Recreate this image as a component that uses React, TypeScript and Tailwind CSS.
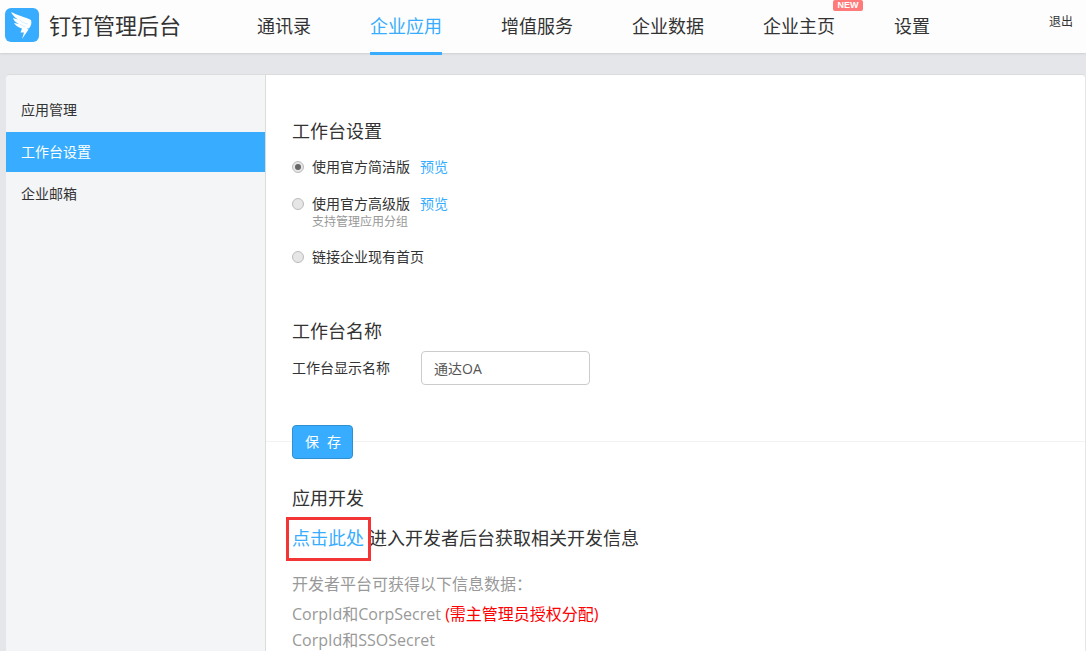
const CJK = "font-['Open_Sans','Noto_Sans_CJK_SC',sans-serif]";

function Logo() {
  return (
    <div className="w-[34px] h-[34px] rounded-[6px] bg-[#38adff] shrink-0">
      <svg width="34" height="34" viewBox="0 0 34 34">
        <path d="M6 4 C12 7 21 9.5 26 12 C27 15 26 18 24 20.5 L21.5 20.5 L23.5 21.5 L17 31 L19 24.5 L15.5 24.5 L17 20.5 C13 19.5 10.5 17.5 9 15 L14 16 C11 14.5 8.5 12.5 8 10 L13 11.5 C10 9.5 7.5 7 6 4 Z" fill="#fff" />
        <path d="M14.5 12 C17 14 20 15.5 23 16 M15 16.2 C16.5 17.3 18.5 18.3 20.5 18.8" stroke="#bfe4ff" strokeWidth="0.7" fill="none" />
      </svg>
    </div>
  );
}

function NavItem({ label, active, badge }: { label: string; active?: boolean; badge?: boolean }) {
  return (
    <div className={`relative h-[55px] pt-[15px] text-[18px] leading-[22px] border-b-[3px] ${active ? "text-[#38adff] border-[#38adff]" : "text-[#333] border-transparent"}`}>
      {label}
      {badge && (
        <span className="absolute left-[70px] top-0 w-[30px] h-[11px] rounded-[2px] bg-[#ff7b7b] text-white text-[9px] leading-[11px] font-bold text-center font-['Liberation_Sans',sans-serif]">NEW</span>
      )}
    </div>
  );
}

function Radio({ checked }: { checked?: boolean }) {
  return (
    <span className="w-[12px] h-[12px] rounded-full border border-[#bbb] bg-[#e6e6e6] flex items-center justify-center shrink-0">
      {checked && <span className="w-[6px] h-[6px] rounded-full bg-[#666]" />}
    </span>
  );
}

export default function App() {
  return (
    <div className={`w-[1086px] h-[651px] overflow-hidden bg-[#e5e6e9] flex flex-col text-[#333] ${CJK}`}>
      <header className="h-[53px] bg-[#fdfdfd] shadow-[0_1px_2px_rgba(0,0,0,0.1)] flex items-start shrink-0 relative z-10">
        <div className="flex items-center pl-[5px] pt-[8px] w-[257px] shrink-0">
          <Logo />
          <span className="ml-[10px] text-[22px] leading-[34px] text-[#333]">钉钉管理后台</span>
        </div>
        <nav className="flex gap-[59px]">
          <NavItem label="通讯录" />
          <NavItem label="企业应用" active />
          <NavItem label="增值服务" />
          <NavItem label="企业数据" />
          <NavItem label="企业主页" badge />
          <NavItem label="设置" />
        </nav>
        <span className="ml-auto mr-[13px] mt-[14px] text-[12px] leading-[16px] text-[#333]">退出</span>
      </header>

      <div className="mt-[21px] ml-[6px] flex-1 flex rounded-t-[4px] overflow-hidden border-t border-[#dcdcdc] min-h-0 w-[1079px]">
        <aside className="w-[259px] shrink-0 bg-[#f4f5f7] pt-[15px] text-[14px]">
          <div className="h-[42px] pl-[15px] leading-[40px]">应用管理</div>
          <div className="h-[40px] pl-[15px] leading-[40px] bg-[#38adff] text-white">工作台设置</div>
          <div className="h-[42px] pl-[15px] leading-[44px]">企业邮箱</div>
        </aside>
        <main className="flex-1 bg-white border-l border-[#dcdcdc] flex flex-col">
          <section className="pl-[26px] pt-[44px]">
            <h2 className="text-[18px] leading-[24px] font-normal">工作台设置</h2>
            <div className="mt-[14px] flex items-center gap-[8px] text-[14px] leading-[20px]">
              <Radio checked />
              <span>使用官方简洁版</span>
              <span className="ml-[2px] text-[#38adff]">预览</span>
            </div>
            <div className="mt-[17px] flex items-center gap-[8px] text-[14px] leading-[20px]">
              <Radio />
              <span>使用官方高级版</span>
              <span className="ml-[2px] text-[#38adff]">预览</span>
            </div>
            <div className="pl-[20px] text-[12px] leading-[16px] text-[#999]">支持管理应用分组</div>
            <div className="mt-[17px] flex items-center gap-[8px] text-[14px] leading-[20px]">
              <Radio />
              <span>链接企业现有首页</span>
            </div>
            <h2 className="mt-[52px] text-[18px] leading-[24px] font-normal">工作台名称</h2>
            <div className="mt-[8px] flex items-center">
              <label className="w-[129px] text-[14px] leading-[20px] -mt-[1px]">工作台显示名称</label>
              <div className="w-[169px] h-[34px] rounded-[4px] border border-[#ccc] pl-[12px] text-[14px] leading-[34px] text-[#555]">通达OA</div>
            </div>
          </section>

          <section className="relative mt-[40px] h-[34px] pl-[26px]">
            <div className="absolute left-0 right-0 top-[16px] border-t border-[#f2f2f2]" />
            <button className="relative w-[61px] h-[34px] rounded-[4px] bg-[#38adff] border border-[#2f8fd0] text-white text-[14px] leading-[30px] tracking-[8px] pl-[9px]">保存</button>
          </section>

          <section className="pl-[26px] pt-[27px]">
            <h2 className="text-[18px] leading-[24px] font-normal">应用开发</h2>
            <div className="mt-[15px] flex items-center text-[18px] leading-[26px]">
              <span className="relative text-[#38adff]">
                点击此处
                <span className="absolute -left-[6px] -top-[8px] w-[85px] h-[44px] border-[3px] border-[#f33535]" />
              </span>
              <span className="ml-[5px]">进入开发者后台获取相关开发信息</span>
            </div>
            <p className="mt-[21px] text-[16px] leading-[24px] text-[#999]">开发者平台可获得以下信息数据：</p>
            <p className="mt-[5px] text-[16px] leading-[26px] text-[#999]">CorpId和CorpSecret <span className="text-[#f00]">(需主管理员授权分配)</span></p>
            <p className="text-[16px] leading-[26px] text-[#999]">CorpId和SSOSecret</p>
          </section>
        </main>
      </div>
    </div>
  );
}
